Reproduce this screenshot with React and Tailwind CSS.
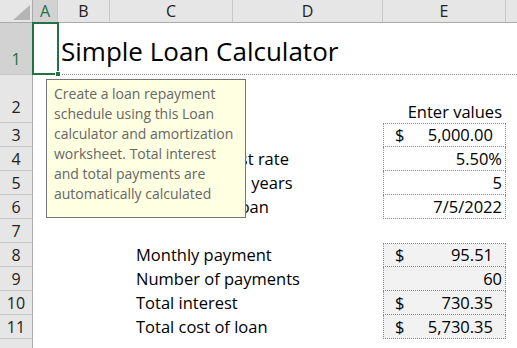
import React from 'react';

const cols = ['A', 'B', 'C', 'D', 'E'];

// widths of row-header + A..E, the last column takes what is left
const gridCols = 'grid grid-cols-[33px_25px_52px_123px_150px_123px_1fr]';

const inputRows = [
  { n: 3, label: 'Loan amount', cur: true, value: '5,000.00' },
  { n: 4, label: 'Annual interest rate', value: '5.50%' },
  { n: 5, label: 'Loan period in years', value: '5' },
  { n: 6, label: 'Start date of loan', value: '7/5/2022' },
];

const resultRows = [
  { n: 8, label: 'Monthly payment', cur: true, value: '95.51' },
  { n: 9, label: 'Number of payments', value: '60' },
  { n: 10, label: 'Total interest', cur: true, value: '730.35' },
  { n: 11, label: 'Total cost of loan', cur: true, value: '5,730.35' },
];

const tipLines = [
  'Create a loan repayment',
  'schedule using this Loan',
  'calculator and amortization',
  'worksheet. Total interest',
  'and total payments are',
  'automatically calculated',
];

function RowHead({ n, active, tall }) {
  return (
    <div
      className={`flex items-end justify-center border-r border-b border-r-[#ababab] border-b-[#c8c8c8] text-[16px] leading-[20px] ${
        active ? 'bg-[#d2d2d2] text-[#217346]' : 'bg-[#e6e6e6] text-[#222]'
      } ${tall ? 'pb-[5px]' : 'pb-[1px]'}`}
    >
      {n}
    </div>
  );
}

function ValueCell({ cur, value, first, shaded }) {
  return (
    <div
      className={`flex items-center border-x border-b border-dotted border-[#8a8a8a] ${first ? 'border-t' : ''} ${
        shaded ? 'bg-[#f2f2f2]' : 'bg-white'
      } ${cur ? 'justify-between pl-[11px] pr-[12px]' : 'justify-end pr-[3px]'}`}
    >
      {cur && <span>$</span>}
      <span>{value}</span>
    </div>
  );
}

function DataRow({ row, first, shaded }) {
  return (
    <>
      <RowHead n={row.n} />
      <div />
      <div />
      <div className="col-span-2 flex items-center whitespace-nowrap pl-[26px] overflow-hidden">{row.label}</div>
      <ValueCell cur={row.cur} value={row.value} first={first} shaded={shaded} />
      <div />
    </>
  );
}

export default function App() {
  return (
    <div className="relative w-[517px] h-[348px] overflow-hidden bg-white text-black font-['Open_Sans',sans-serif] text-[16.5px] leading-[20px]">
      <div className={`${gridCols} grid-rows-[23px_52px_48px_repeat(9,24px)_1fr] h-full`}>
        {/* column headers */}
        <div className="relative bg-[#e6e6e6] border-r border-b border-[#ababab]">
          <svg className="absolute left-[13px] top-[5px]" width="17" height="15" viewBox="0 0 17 15">
            <polygon points="17,0 17,15 0,15" fill="#b5b5b5" />
          </svg>
        </div>
        {cols.map((c) => (
          <div
            key={c}
            className={`flex items-center justify-center border-r border-b border-r-[#c8c8c8] border-b-[#ababab] text-[16px] ${
              c === 'A' ? 'bg-[#d2d2d2] text-[#217346]' : 'bg-[#e6e6e6] text-[#222]'
            }`}
          >
            {c}
          </div>
        ))}
        <div className="bg-[#e6e6e6] border-b border-[#ababab]" />

        {/* row 1: title */}
        <RowHead n={1} active tall />
        <div className="border-b border-dotted border-[#8a8a8a]" />
        <div className="col-span-5 flex items-end border-b border-dotted border-[#8a8a8a] pl-[3px] pb-[6px] text-[26px] leading-[34px] whitespace-nowrap">
          Simple Loan Calculator
        </div>

        {/* row 2 */}
        <RowHead n={2} tall />
        <div />
        <div />
        <div />
        <div />
        <div className="flex items-end justify-end pr-[4px] pb-[1px]">Enter values</div>
        <div />

        {inputRows.map((r, i) => (
          <DataRow key={r.n} row={r} first={i === 0} />
        ))}

        {/* row 7 */}
        <RowHead n={7} />
        <div className="col-span-6" />

        {resultRows.map((r, i) => (
          <DataRow key={r.n} row={r} first={i === 0} shaded />
        ))}

        <div className="bg-[#e6e6e6] border-r border-[#ababab]" />
        <div className="col-span-6" />
      </div>

      {/* active cell A1 */}
      <div className="absolute left-[32px] top-[22px] w-[27px] h-[53px] border-2 border-[#217346]" />
      <div className="absolute left-[55px] top-[71px] w-[6px] h-[6px] bg-[#217346] border border-white" />

      {/* cell input message */}
      <div className="absolute left-[46px] top-[79px] w-[200px] h-[139px] bg-[#ffffe1] border border-[#767676] pl-[7px] pt-[4px] text-[14px] leading-[20px] text-[#666] whitespace-nowrap">
        {tipLines.map((l) => (
          <div key={l}>{l}</div>
        ))}
      </div>
    </div>
  );
}
